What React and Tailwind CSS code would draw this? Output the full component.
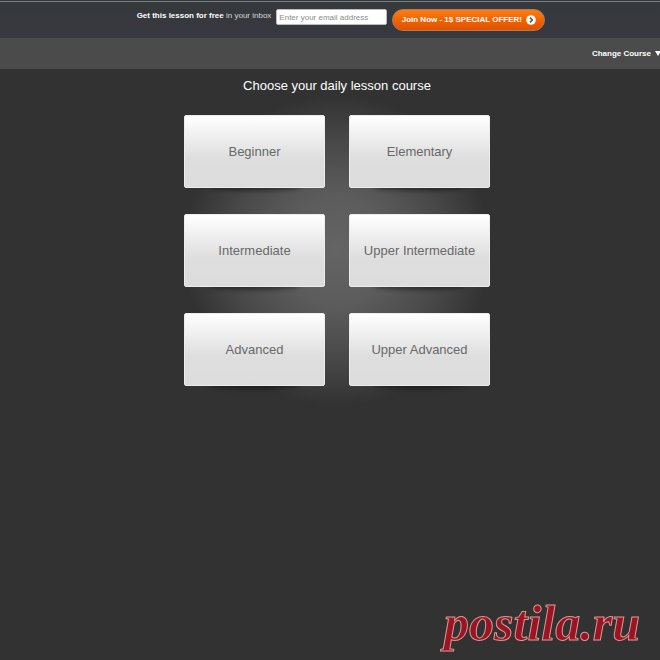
const courses = [
  'Beginner',
  'Elementary',
  'Intermediate',
  'Upper Intermediate',
  'Advanced',
  'Upper Advanced',
];

function SignupBar() {
  return (
    <header className="h-[38px] border-t border-[#30363b] bg-linear-to-b from-[#35393b] to-[#373840]">
      <div className="h-px bg-[#7d8082]" />
      <form className="flex items-start justify-center pt-[7px] pl-[22px]" onSubmit={(e) => e.preventDefault()}>
        <label htmlFor="email" className="mr-[5px] text-[8px] leading-[14px] whitespace-nowrap text-[#d5d7d9]">
          <b className="text-white">Get this lesson for free</b> in your inbox
        </label>
        <input
          id="email"
          type="email"
          placeholder="Enter your email address"
          className="h-4 w-[111px] rounded-[2px] border border-[#b9bcbe] bg-white px-[2px] text-[8px] text-[#555] placeholder:text-[#8c8c8c]"
        />
        <button
          type="submit"
          className="ml-[5px] flex h-[22px] w-[153px] items-center justify-center gap-1 rounded-full border border-[#b77b50] bg-linear-to-b from-[#fb7d18] via-[#f06400] to-[#df5100] text-[8px] font-bold whitespace-nowrap text-white"
        >
          Join Now - 1$ SPECIAL OFFER!
          <svg viewBox="0 0 10 10" className="size-[10px]" aria-hidden="true">
            <circle cx="5" cy="5" r="4.8" fill="#fff" />
            <path d="M4 2.6 6.4 5 4 7.4" fill="none" stroke="#654a4a" strokeWidth="1.5" />
          </svg>
        </button>
      </form>
    </header>
  );
}

function CourseBar() {
  return (
    <nav className="flex h-[31px] items-center justify-end overflow-hidden bg-[#4b4b4b]">
      <button type="button" className="-mr-px flex items-center gap-1 text-[8px] font-bold text-white">
        Change Course
        <svg viewBox="0 0 6 5" className="h-[5px] w-[6px]" aria-hidden="true">
          <path d="M0 0H6L3 5Z" fill="#fff" />
        </svg>
      </button>
    </nav>
  );
}

function CourseCard({ name }) {
  return (
    <div className="relative h-[73px]">
      <div className="absolute right-6 -bottom-[3px] left-6 h-2 rounded-[50%] bg-black/40 blur-[2px]" />
      <button
        type="button"
        className="relative size-full rounded-[2px] border border-[#ededed] bg-linear-to-b from-white via-[#dedede] via-60% to-[#dcdcdc] text-[13px] text-[#686868]"
      >
        {name}
      </button>
    </div>
  );
}

export default function App() {
  return (
    <div className="flex min-h-screen flex-col bg-[#323232] font-['Liberation_Sans',Arial,sans-serif]">
      <SignupBar />
      <CourseBar />
      <main className="flex flex-1 flex-col items-center pl-[14px]">
        <h1 className="mt-2 text-[13px] leading-[18px] text-white">Choose your daily lesson course</h1>
        <div className="bg-[radial-gradient(ellipse_50%_50%_at_50%_50%,#646464_0%,#5c5c5c_35%,#484848_70%,#323232_100%)] py-5">
          <div className="grid grid-cols-[141px_141px] gap-x-6 gap-y-[26px]">
            {courses.map((name) => (
              <CourseCard key={name} name={name} />
            ))}
          </div>
        </div>
      </main>
      <footer className="flex justify-end pr-5">
        <span className="pb-3 font-['Liberation_Serif',serif] text-[50px] leading-[50px] font-bold text-[#9b1424] italic [-webkit-text-stroke:1px_#d99a94]">
          postila.ru
        </span>
      </footer>
    </div>
  );
}
